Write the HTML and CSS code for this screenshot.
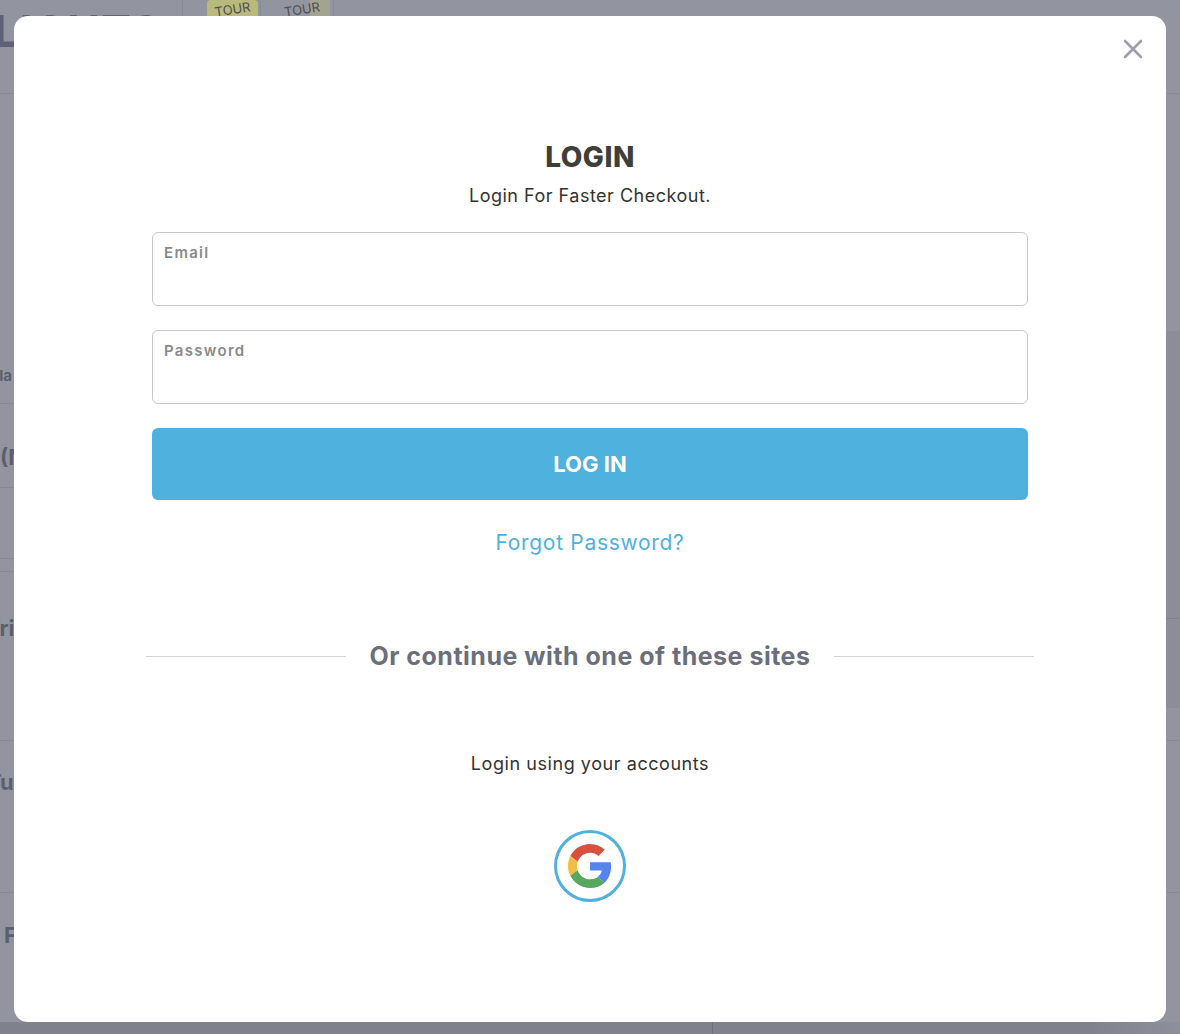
FILE: index.html
```html
<!DOCTYPE html>
<html>
<head>
    <meta charset="UTF-8">
    <title>Login</title>
    <link rel="stylesheet" href="styles.css">
</head>
<body>
    <div class="page">
        <header class="page-head">
            <div class="brand">LIGHTS</div>
            <div class="sticker-cell cell-yellow">
                <div class="sticker sticker-yellow"><span>TOUR</span></div>
            </div>
            <div class="sticker-cell cell-plain">
                <div class="sticker sticker-plain"><span>TOUR</span></div>
            </div>
        </header>
        <div class="row row-1"><span>Gla</span></div>
        <div class="row row-2"><span>(N</span></div>
        <div class="row row-3"></div>
        <div class="row row-3b"></div>
        <div class="row row-4"><span>Tri</span></div>
        <div class="row row-5"><span>Tu</span></div>
        <div class="row row-6"><span>F</span></div>
        <div class="page-side">
            <div class="side-a"></div>
            <div class="side-b"></div>
        </div>
        <div class="page-foot"></div>
    </div>

    <div class="overlay">
        <div class="modal">
            <button class="close" aria-label="Close">
                <svg width="20" height="20" viewBox="0 0 20 20">
                    <path d="M2 2 18 18M18 2 2 18" stroke="#9a9fab" stroke-width="2.6" stroke-linecap="round" fill="none"/>
                </svg>
            </button>

            <h1>LOGIN</h1>
            <div class="subtitle">Login For Faster Checkout.</div>

            <label class="field">
                <span>Email</span>
                <input type="email">
            </label>
            <label class="field">
                <span>Password</span>
                <input type="password">
            </label>

            <button class="submit">LOG IN</button>
            <a class="forgot" href="#">Forgot Password?</a>

            <div class="divider">
                <span class="line"></span>
                <span class="divider-text">Or continue with one of these sites</span>
                <span class="line"></span>
            </div>

            <div class="accounts">Login using your accounts</div>

            <a class="google" href="#" aria-label="Google">
                <svg width="44" height="44" viewBox="0 0 48 48">
                    <path fill="#d9503f" d="M24 9.5c3.54 0 6.71 1.22 9.21 3.6l6.85-6.85C35.9 2.38 30.47 0 24 0 14.62 0 6.51 5.38 2.56 13.22l7.98 6.19C12.43 13.72 17.74 9.5 24 9.5z"/>
                    <path fill="#5584ee" d="M46.98 24.55c0-1.57-.15-3.09-.38-4.55H24v9.02h12.94c-.58 2.96-2.26 5.48-4.78 7.18l7.73 6c4.51-4.18 7.09-10.36 7.09-17.65z"/>
                    <path fill="#f2bd42" d="M10.53 28.59c-.48-1.45-.76-2.99-.76-4.59s.27-3.14.76-4.59l-7.98-6.19C.92 16.46 0 20.12 0 24c0 3.88.92 7.54 2.56 10.78l7.97-6.19z"/>
                    <path fill="#57a75c" d="M24 48c6.48 0 11.93-2.13 15.89-5.81l-7.73-6c-2.15 1.45-4.92 2.3-8.16 2.3-6.26 0-11.57-4.22-13.47-9.91l-7.98 6.19C6.51 42.62 14.62 48 24 48z"/>
                </svg>
            </a>
        </div>
    </div>
</body>
</html>
```

FILE: styles.css
```css
* {
    box-sizing: border-box;
}
html, body {
    margin: 0;
    height: 100%;
    overflow: hidden;
}
body {
    font-family: Inter, "Open Sans", sans-serif;
    background: #92959f;
}
.page {
    position: relative;
    height: 1034px;
    overflow: hidden;
    color: #5d606c;
    font-weight: 700;
}
.page-head {
    display: flex;
    height: 94px;
    border-bottom: 1px solid #878a94;
}
.brand {
    width: 189px;
    height: 48px;
    margin-left: -6px;
    font-size: 44px;
    line-height: 62px;
    letter-spacing: 1px;
    color: #5f6178;
    border-right: 1px solid #878a94;
    overflow: hidden;
}
.sticker-cell {
    display: flex;
    height: 18px;
    border-right: 1px solid #878a94;
    overflow: hidden;
}
.cell-yellow {
    width: 78px;
    padding-left: 24px;
}
.cell-plain {
    width: 73px;
    padding-left: 13px;
}
.sticker {
    height: 18px;
    font-size: 13px;
    font-weight: 400;
    line-height: 18px;
    color: #4c4e55;
    text-align: center;
}
.sticker span {
    display: block;
    transform: rotate(-9deg);
}
.sticker-yellow {
    width: 51px;
    background: #b9b97c;
    border-radius: 4px;
}
.sticker-plain {
    width: 56px;
    background: linear-gradient(90deg, #92959f 65%, #a3a48f 65%);
}
.row {
    display: flex;
    align-items: center;
    border-bottom: 1px solid #878a94;
    overflow: hidden;
    white-space: nowrap;
}
.row span {
    font-size: 22px;
    margin-left: -8px;
}
.row-1 {
    height: 310px;
    padding-top: 253px;
}
.row-1 span {
    margin-left: -12px;
    font-size: 15px;
}
.row-2 {
    height: 84px;
    padding-top: 22px;
}
.row-2 span {
    margin-left: 0;
}
.row-3 {
    height: 71px;
}
.row-3b {
    height: 13px;
}
.row-4 {
    height: 169px;
    padding-bottom: 56px;
}
.row-4 span {
    margin-left: -14px;
}
.row-5 {
    height: 152px;
    padding-bottom: 70px;
}
.row-5 span {
    margin-left: -13px;
}
.row-6 {
    height: 100px;
    padding-bottom: 16px;
    border-bottom: 0;
}
.row-6 span {
    margin-left: 4px;
}
.page-side {
    position: absolute;
    top: 331px;
    right: 0;
    width: 14px;
}
.side-a {
    height: 288px;
    background: #8b8e98;
    border-bottom: 1px solid #7f828c;
}
.side-b {
    height: 89px;
    background: #8b8e98;
}
.page-foot {
    position: absolute;
    left: 0;
    right: 0;
    bottom: 0;
    height: 12px;
    background: linear-gradient(90deg, #7f828c 92%, #8d909a 100%);
}
.page-foot::after {
    content: "";
    position: absolute;
    left: 712px;
    top: 0;
    bottom: 0;
    width: 1px;
    background: #6e717b;
}
.overlay {
    position: fixed;
    top: 0;
    left: 0;
    right: 0;
    bottom: 0;
    padding: 16px 14px 12px;
}
.modal {
    position: relative;
    height: 100%;
    background: #fff;
    border-radius: 14px;
    display: flex;
    flex-direction: column;
    align-items: center;
    padding-top: 125px;
}
.close {
    position: absolute;
    top: 23px;
    right: 23px;
    width: 20px;
    height: 20px;
    padding: 0;
    border: none;
    background: none;
    line-height: 0;
}
h1 {
    margin: 0;
    font-size: 28px;
    line-height: 32px;
    letter-spacing: 0.5px;
    font-weight: 800;
    color: #403e38;
}
.subtitle {
    margin-top: 11px;
    font-size: 18px;
    line-height: 24px;
    letter-spacing: 0.5px;
    color: #333;
}
.field {
    display: block;
    width: 876px;
    height: 74px;
    margin-top: 24px;
    padding: 11px 11px 0;
    border: 1px solid #c8c8c8;
    border-radius: 6px;
}
.field span {
    display: block;
    font-size: 15px;
    line-height: 18px;
    font-weight: 600;
    letter-spacing: 1.3px;
    color: #8a8a8a;
}
.field input {
    display: block;
    width: 100%;
    height: 30px;
    border: none;
    outline: none;
    background: none;
}
.submit {
    width: 876px;
    height: 72px;
    margin-top: 24px;
    border: none;
    border-radius: 6px;
    background: #4fb1de;
    color: #fff;
    font-family: inherit;
    font-size: 22px;
    font-weight: 700;
}
.forgot {
    margin-top: 29px;
    font-size: 21px;
    line-height: 28px;
    letter-spacing: 0.7px;
    color: #4fb1de;
    text-decoration: none;
}
.divider {
    display: flex;
    align-items: center;
    justify-content: space-between;
    width: 888px;
    margin-top: 84px;
}
.line {
    width: 200px;
    height: 1px;
    background: #d4d4d4;
}
.divider-text {
    font-size: 25px;
    line-height: 30px;
    letter-spacing: 0.5px;
    font-weight: 700;
    color: #6b6f7c;
}
.accounts {
    margin-top: 81px;
    font-size: 18px;
    line-height: 24px;
    letter-spacing: 0.56px;
    color: #333;
}
.google {
    display: flex;
    align-items: center;
    justify-content: center;
    width: 72px;
    height: 72px;
    margin-top: 54px;
    border: 3px solid #4fb1de;
    border-radius: 50%;
}
```
